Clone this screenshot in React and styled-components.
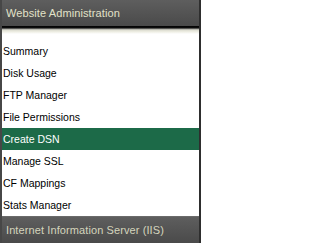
import styled, { createGlobalStyle } from 'styled-components'

const GlobalStyle = createGlobalStyle`
  html, body {
    margin: 0;
    padding: 0;
    background: #ffffff;
  }
`

const Panel = styled.div`
  display: flex;
  flex-direction: column;
  width: 201px;
  height: 243px;
  box-sizing: border-box;
  border-left: 2px solid #474747;
  border-right: 2px solid #2e2e2e;
  background: #ffffff;
  font-family: 'Liberation Sans', Arial, sans-serif;
`

const Bar = styled.div`
  display: flex;
  align-items: center;
  height: ${(props) => props.$height}px;
  padding-left: 4px;
  box-sizing: border-box;
  background: linear-gradient(to bottom, #5e5e5e 0%, #4a4a4a 100%);
  border-top: ${(props) => (props.$footer ? '1px solid #6a6a6a' : 'none')};
  color: ${(props) => (props.$footer ? '#d4d4bc' : '#e2e2c8')};
  font-size: 11px;
  letter-spacing: 0.1px;
  white-space: nowrap;
`

const Shadow = styled.div`
  height: 8px;
  flex-shrink: 0;
  background: linear-gradient(
    to bottom,
    #000000 0px,
    #111111 2px,
    #9a9a94 3px,
    #dcdcd0 4px,
    #f0f0e6 6px,
    #ffffff 8px
  );
`

const Menu = styled.ul`
  list-style: none;
  margin: 0;
  padding: 6px 0 0 0;
  flex: 1;
`

const Item = styled.li`
  display: flex;
  align-items: center;
  height: 22px;
  padding-left: 1px;
  font-size: 10.5px;
  color: ${(props) => (props.$active ? '#ffffff' : '#000000')};
  background: ${(props) => (props.$active ? '#1c6a48' : 'transparent')};
  white-space: nowrap;
`

const items = [
  'Summary',
  'Disk Usage',
  'FTP Manager',
  'File Permissions',
  'Create DSN',
  'Manage SSL',
  'CF Mappings',
  'Stats Manager',
]

export default function App() {
  return (
    <>
      <GlobalStyle />
      <Panel>
        <Bar $height={26}>Website Administration</Bar>
        <Shadow />
        <Menu>
          {items.map((label) => (
            <Item key={label} $active={label === 'Create DSN'}>
              {label}
            </Item>
          ))}
        </Menu>
        <Bar $height={27} $footer>
          Internet Information Server (IIS)
        </Bar>
      </Panel>
    </>
  )
}
